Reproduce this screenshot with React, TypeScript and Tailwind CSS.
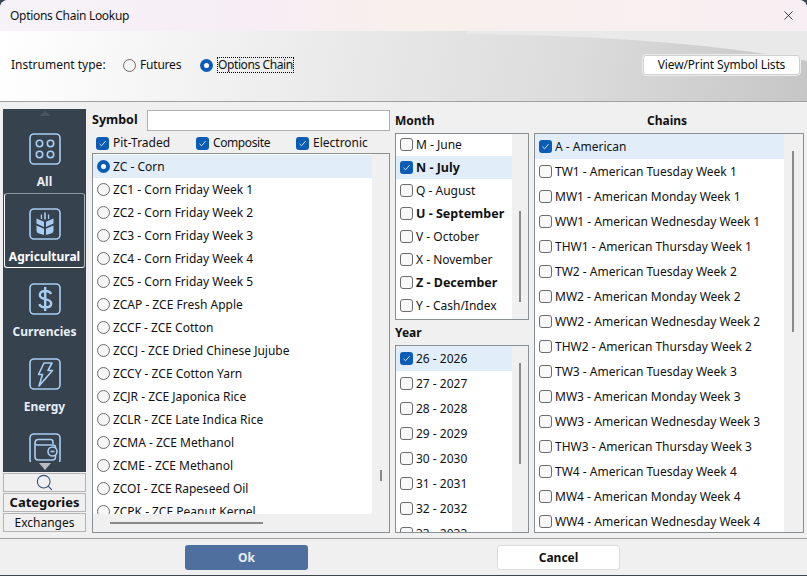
import { X, Search } from "lucide-react"

const symbols = [
  "ZC - Corn",
  "ZC1 - Corn Friday Week 1",
  "ZC2 - Corn Friday Week 2",
  "ZC3 - Corn Friday Week 3",
  "ZC4 - Corn Friday Week 4",
  "ZC5 - Corn Friday Week 5",
  "ZCAP - ZCE Fresh Apple",
  "ZCCF - ZCE Cotton",
  "ZCCJ - ZCE Dried Chinese Jujube",
  "ZCCY - ZCE Cotton Yarn",
  "ZCJR - ZCE Japonica Rice",
  "ZCLR - ZCE Late Indica Rice",
  "ZCMA - ZCE Methanol",
  "ZCME - ZCE Methanol",
  "ZCOI - ZCE Rapeseed Oil",
  "ZCPK - ZCE Peanut Kernel",
]

const months = [
  { label: "M - June" },
  { label: "N - July", bold: true, checked: true },
  { label: "Q - August" },
  { label: "U - September", bold: true },
  { label: "V - October" },
  { label: "X - November" },
  { label: "Z - December", bold: true },
  { label: "Y - Cash/Index" },
]

const years = ["26 - 2026", "27 - 2027", "28 - 2028", "29 - 2029", "30 - 2030", "31 - 2031", "32 - 2032", "33 - 2033"]

const chains = [
  "A - American",
  "TW1 - American Tuesday Week 1",
  "MW1 - American Monday Week 1",
  "WW1 - American Wednesday Week 1",
  "THW1 - American Thursday Week 1",
  "TW2 - American Tuesday Week 2",
  "MW2 - American Monday Week 2",
  "WW2 - American Wednesday Week 2",
  "THW2 - American Thursday Week 2",
  "TW3 - American Tuesday Week 3",
  "MW3 - American Monday Week 3",
  "WW3 - American Wednesday Week 3",
  "THW3 - American Thursday Week 3",
  "TW4 - American Tuesday Week 4",
  "MW4 - American Monday Week 4",
  "WW4 - American Wednesday Week 4",
]

function Radio({ on }: { on?: boolean }) {
  if (on) {
    return (
      <span className="flex h-[13px] w-[13px] shrink-0 items-center justify-center rounded-full bg-[#0a5cb4]">
        <span className="h-[5px] w-[5px] rounded-full bg-white" />
      </span>
    )
  }
  return <span className="h-[13px] w-[13px] shrink-0 rounded-full border border-[#6b6b6b] bg-[#f6f6f6]" />
}

function Check({ on }: { on?: boolean }) {
  if (on) {
    return (
      <span className="flex h-[13px] w-[13px] shrink-0 items-center justify-center rounded-[3px] bg-[#0a5cb4]">
        <svg width="9" height="9" viewBox="0 0 9 9" fill="none" stroke="#cfe2f6" strokeWidth="1">
          <path d="M1.5 4.8 3.6 6.8 7.5 2.2" />
        </svg>
      </span>
    )
  }
  return <span className="h-[13px] w-[13px] shrink-0 rounded-[3px] border border-[#6b6b6b] bg-[#f8f8f8]" />
}

function CatIcon({ children }: { children: React.ReactNode }) {
  return (
    <svg width="32" height="32" viewBox="0 0 32 32" fill="none" stroke="#a8cdf2" strokeWidth="1.6" className="shrink-0">
      <rect x="1" y="1" width="30" height="30" rx="4" />
      {children}
    </svg>
  )
}

function Category({ label, active, children }: { label: string; active?: boolean; children: React.ReactNode }) {
  return (
    <div
      className={`mx-[1px] flex h-[75px] shrink-0 flex-col items-center rounded-[3px] border pt-[14px] ${
        active ? "border-t-[#8e979f] border-r-[#aab1b7] border-b-white border-l-white" : "border-transparent"
      }`}
    >
      {children}
      <span className={`mt-[8px] text-[12px] leading-[18px] font-bold ${active ? "text-white" : "text-[#e6eef6]"}`}>
        {label}
      </span>
    </div>
  )
}

export default function App() {
  return (
    <div className="h-[576px] w-[807px] overflow-hidden bg-[#3c4650] font-['Noto_Sans',sans-serif] text-[12px] text-[#111]">
      <div className="relative flex h-[575px] flex-col overflow-hidden rounded-t-[8px] bg-[#f0f0f0]">
        {/* title bar */}
        <div className="flex h-[31px] shrink-0 items-center justify-between bg-[linear-gradient(90deg,#f6f3f8_0%,#f6eef5_30%,#f8f0ec_50%,#f8eff4_100%)] pl-[10px] pr-[11px]">
          <span className="text-[12px] tracking-[-0.3px]">Options Chain Lookup</span>
          <X size={15} strokeWidth={1.3} />
        </div>

        {/* instrument row */}
        <div className="relative flex h-[71px] shrink-0 items-center justify-between overflow-hidden border-b border-[#a0a0a0] bg-[linear-gradient(100deg,#ffffff_0%,#e8e8e8_45%,#dcdcdc_70%,#c6c6c6_100%)] pb-[2px] pl-[11px] pr-[7px]">
          <svg className="absolute top-0 right-0" width="340" height="30" viewBox="0 0 340 30">
            <path d="M0 0H340V30C260 14 130 4 0 3Z" fill="#e9e9e9" />
          </svg>
          <div className="relative flex items-center">
            <span className="w-[112px]">Instrument type:</span>
            <Radio />
            <span className="ml-[4px] w-[60px] tracking-[-0.2px]">Futures</span>
            <Radio on />
            <span className="ml-[4px] border border-dotted border-black leading-[14px] tracking-[-0.4px]">Options Chain</span>
          </div>
          <button className="relative h-[20px] w-[157px] rounded-[3px] border border-[#cfcfcf] bg-white text-[12px] leading-[16px] tracking-[-0.15px] outline outline-1 outline-[#ececec]">
            View/Print Symbol Lists
          </button>
        </div>

        {/* main */}
        <div className="flex min-h-0 flex-1 gap-[5px] pl-[3px] pr-[3px] pt-[7px] pb-[5px]">
          <div className="mr-[1px] flex w-[83px] shrink-0 flex-col">
            <div className="relative flex h-[363px] flex-col overflow-hidden bg-[#37424f]">
              <div className="flex h-[9px] shrink-0 justify-center pt-[2px]">
                <span className="h-0 w-0 border-x-[6px] border-b-[5px] border-x-transparent border-b-[#4a5561]" />
              </div>
              <Category label="All">
                <CatIcon>
                  <circle cx="10.500" cy="10.500" r="3.200" />
                  <circle cx="21.500" cy="10.500" r="3.200" />
                  <circle cx="10.500" cy="21.500" r="3.200" />
                  <circle cx="21.500" cy="21.500" r="3.200" />
                </CatIcon>
              </Category>
              <Category label="Agricultural" active>
                <CatIcon>
                  <g fill="#a8cdf2" stroke="none">
                    <path d="M15.200 4.500h1.600v7h-1.600z" />
                    <path d="M11.800 6.500h1.300v4.500h-1.300zM18.900 6.500h1.300v4.500h-1.300z" />
                    <path d="M7.500 10.500l7.500 3.300v5.200l-7.500-3.400zM24.500 10.500l-7.500 3.300v5.200l7.500-3.400z" />
                    <path d="M7.500 17.500l7.500 3.300v6.200l-5-1.500c-1.500-.5-2.500-1.500-2.500-3zM24.500 17.500l-7.500 3.300v6.200l5-1.500c1.500-.5 2.500-1.500 2.500-3z" />
                  </g>
                </CatIcon>
              </Category>
              <Category label="Currencies">
                <CatIcon>
                  <path
                    d="M22 11c-.7-2-2.800-3-5.700-3-3.200 0-5.500 1.500-5.500 4s2.300 3.400 5.500 4.100 5.900 1.700 5.900 4.400-2.700 4-5.900 4c-3 0-5.300-1.200-6-3.300M16.200 4v24"
                    strokeWidth="2.400"
                  />
                </CatIcon>
              </Category>
              <Category label="Energy">
                <CatIcon>
                  <path d="M15 5h8l-4 7.500h4.500L10 28l3.500-11.500H9.500z" strokeLinejoin="round" />
                </CatIcon>
              </Category>
              <div className="mx-[1px] flex flex-col items-center border border-transparent pt-[14px]">
                <CatIcon>
                  <path d="M6 10c0-2 1.500-3.500 3.500-3.500h12c1.500 0 2.500 1 2.500 2.500v2" />
                  <path d="M6 10v13.500c0 2 1.300 3.500 3.500 3.500h14c2 0 3-1.300 3-3v-2.500M6 10c0 1.500 1.200 2 2.500 2h15.500c1.500 0 2.500 1 2.500 2.500v1.500" />
                  <circle cx="23.500" cy="18.500" r="4.500" fill="#37424f" />
                  <path d="M21.500 18.500h4" />
                </CatIcon>
              </div>
              <div className="absolute right-0 bottom-0 left-0 flex h-[10px] justify-center bg-[#37424f] pt-[1px]">
                <span className="h-0 w-0 border-x-[6px] border-t-[7px] border-x-transparent border-t-[#b6bcc2]" />
              </div>
            </div>
            <div className="mt-[1px] flex h-[19px] shrink-0 items-center justify-center border border-[#b4b4b4]">
              <Search size={19} strokeWidth={1.4} className="text-[#37507a]" />
            </div>
            <div className="mt-[1px] flex h-[19px] shrink-0 items-center justify-center border border-[#b4b4b4] text-[13px] font-bold">
              Categories
            </div>
            <div className="mt-[1px] flex h-[19px] shrink-0 items-center justify-center border border-[#b4b4b4]">
              Exchanges
            </div>
          </div>

          {/* symbol */}
          <div className="flex w-[298px] shrink-0 flex-col">
            <div className="flex h-[22px] shrink-0 items-center">
              <span className="w-[55px] text-[12.500px] font-bold">Symbol</span>
              <div className="h-[21px] flex-1 border border-[#b0b0b0] bg-white" />
            </div>
            <div className="flex h-[22px] shrink-0 items-center pl-[4px] pt-[2px]">
              <span className="flex w-[100px] items-center gap-[4px]"><Check on />Pit-Traded</span>
              <span className="flex w-[100px] items-center gap-[4px] tracking-[-0.4px]"><Check on />Composite</span>
              <span className="flex items-center gap-[4px]"><Check on />Electronic</span>
            </div>
            <div className="relative min-h-0 flex-1 overflow-hidden border border-[#8a8f94] bg-[#f0f0f0]">
              <div className="h-[360px] w-[279px] overflow-hidden rounded-br-[2px] bg-white pt-[1px]">
                {symbols.map((s, i) => (
                  <div key={s} className={`flex h-[23px] items-center gap-[3px] pl-[4px] ${i === 0 ? "bg-[#e1eefa]" : ""}`}>
                    <Radio on={i === 0} />
                    <span>{s}</span>
                  </div>
                ))}
              </div>
              <span className="absolute top-[316px] left-[287px] h-[11px] w-[2px] bg-[#8a8a8a]" />
              <span className="absolute top-[368px] left-[17px] h-[2px] w-[153px] bg-[#8a8a8a]" />
            </div>
          </div>

          {/* month + year */}
          <div className="flex w-[134px] shrink-0 flex-col">
            <div className="flex h-[24px] shrink-0 items-center font-bold">Month</div>
            <div className="relative h-[187px] shrink-0 overflow-hidden border border-[#8a8f94] bg-[#f0f0f0]">
              <div className="-mt-[1px] h-[186px] w-[116px] overflow-hidden bg-white">
                {months.map((m) => (
                  <div key={m.label} className={`flex h-[23px] items-center gap-[3px] pl-[4px] ${m.checked ? "bg-[#e1eefa]" : ""}`}>
                    <Check on={m.checked} />
                    <span className={`mt-[1px] ${m.bold ? "text-[12.500px] font-bold" : ""}`}>{m.label}</span>
                  </div>
                ))}
              </div>
              <span className="absolute top-[77px] left-[123px] h-[91px] w-[2px] bg-[#8a8a8a]" />
            </div>
            <div className="flex h-[25px] shrink-0 items-center font-bold">Year</div>
            <div className="relative min-h-0 flex-1 overflow-hidden border border-[#8a8f94] bg-[#f0f0f0]">
              <div className="w-[116px] bg-white">
                {years.map((y, i) => (
                  <div key={y} className={`flex h-[25px] items-center gap-[3px] pl-[4px] ${i === 0 ? "bg-[#e1eefa]" : ""}`}>
                    <Check on={i === 0} />
                    <span>{y}</span>
                  </div>
                ))}
              </div>
              <span className="absolute top-[17px] left-[123px] h-[101px] w-[2px] bg-[#8a8a8a]" />
            </div>
          </div>

          {/* chains */}
          <div className="flex min-w-0 flex-1 flex-col">
            <div className="flex h-[24px] shrink-0 items-center justify-center pr-[4px] font-bold">Chains</div>
            <div className="relative min-h-0 flex-1 overflow-hidden border border-[#8a8f94] bg-[#f0f0f0]">
              <div className="w-[249px] bg-white">
                {chains.map((c, i) => (
                  <div key={c} className={`flex h-[25px] items-center gap-[3px] pl-[4px] ${i === 0 ? "bg-[#e1eefa]" : ""}`}>
                    <Check on={i === 0} />
                    <span>{c}</span>
                  </div>
                ))}
              </div>
              <span className="absolute top-[17px] left-[257px] h-[181px] w-[2px] bg-[#8a8a8a]" />
            </div>
          </div>
        </div>

        {/* footer */}
        <div className="flex h-[37px] shrink-0 items-start border-t border-[#a0a0a0] pt-[6px] pl-[185px]">
          <button className="h-[25px] w-[123px] rounded-[3px] bg-[#4f6f9f] text-[12px] font-bold text-[#e8eef6]">Ok</button>
          <button className="ml-[189px] h-[25px] w-[123px] rounded-[3px] border border-[#dcdcdc] bg-white text-[12px] font-bold">
            Cancel
          </button>
        </div>
      </div>
    </div>
  )
}
